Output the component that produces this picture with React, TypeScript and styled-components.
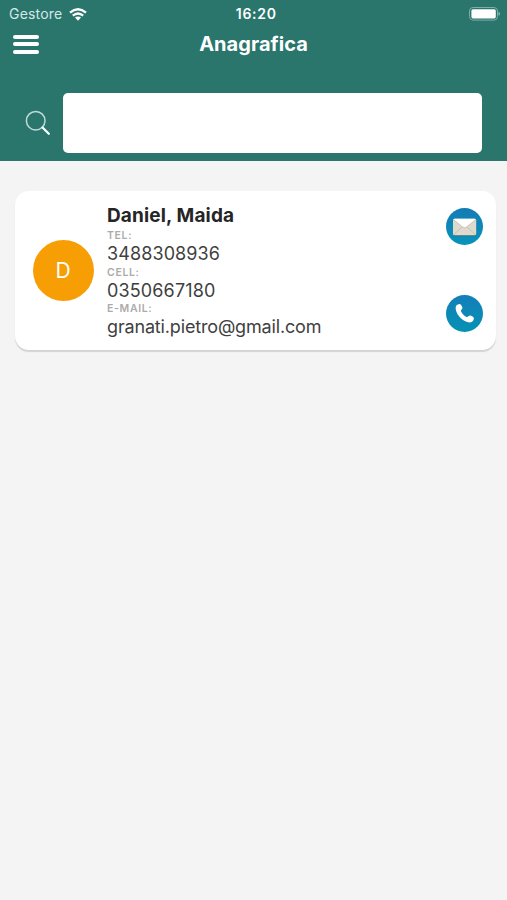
import React from 'react';
import styled, { createGlobalStyle } from 'styled-components';

const Global = createGlobalStyle`
  * { box-sizing: border-box; }
  body { margin: 0; background: #f4f4f4; font-family: Inter, "Liberation Sans", sans-serif; }
`;
const Screen = styled.main` min-height: 900px; background: #f4f4f4; `;
const Header = styled.header` height: 161px; background: #2a766d; color: #fff; display: flex; flex-direction: column; `;
const StatusBar = styled.div`
  height: 28px; display: grid; grid-template-columns: 1fr auto 1fr; align-items: center;
  padding: 0 6px 0 9px; font-size: 14px; line-height: 28px;
`;
const Carrier = styled.div` display: flex; align-items: center; gap: 7px; color: #d5e8e5; `;
const CarrierName = styled.span` letter-spacing: 0.2px; `;
const Clock = styled.time` font-weight: 600; font-size: 14px; letter-spacing: 0.7px; padding-left: 2.5px; `;
const Power = styled.div` display: flex; justify-content: flex-end; `;
const TitleBar = styled.div` height: 32px; display: grid; grid-template-columns: 1fr auto 1fr; align-items: center; padding: 0 13px; `;
const MenuButton = styled.button`
  width: 26px; height: 19px; padding: 0; border: 0; background: none; display: flex; flex-direction: column; justify-content: space-between;
`;
const MenuLine = styled.span` height: 4px; width: 26px; border-radius: 2px; background: #fff; `;
const Title = styled.h1` margin: 0; font-size: 20px; font-weight: 650; line-height: 32px; letter-spacing: 0.05px; `;
const SearchRow = styled.label` display: flex; align-items: center; gap: 12px; margin-top: 33px; padding: 0 25px; `;
const SearchInput = styled.input` flex: 1; height: 60px; min-width: 0; border: 0; border-radius: 5px; background: #fff; padding: 0 12px; font: 18px Inter, sans-serif; outline: 0; `;
const Card = styled.article`
  margin: 30px 11px 0 15px; height: 159px; border-radius: 14px; background: #fff;
  box-shadow: 0 2px 1px #d3d3d3; display: flex; align-items: center; padding: 0 13px 0 18px;
`;
const Avatar = styled.div`
  width: 61px; height: 61px; border-radius: 50%; background: #f79e05; color: #fff;
  display: flex; align-items: center; justify-content: center; font-size: 21px;
  margin-bottom: 1px; padding-right: 1px;
`;
const Details = styled.div` flex: 1; margin-left: 13px; align-self: flex-start; padding-top: 12px; `;
const Name = styled.h2` margin: 0; font-size: 19px; line-height: 25px; font-weight: 680; color: #252525; letter-spacing: 0.14px; `;
const Fields = styled.div` padding-top: 1px; `;
const Label = styled.div` font-size: 10.5px; line-height: 14px; font-weight: 600; color: #ababab; letter-spacing: 0.65px; `;
const Value = styled.div<{ $tracking: number }>` font-size: 18px; line-height: 22.6px; color: #3f3f3f; letter-spacing: ${p => p.$tracking}px; `;
const Actions = styled.div` align-self: stretch; display: flex; flex-direction: column; justify-content: space-between; padding: 17px 0 18px; `;
const ActionButton = styled.button` width: 37px; height: 37px; padding: 0; border: 0; background: none; display: block; `;

const contact = {
  initial: 'D',
  name: 'Daniel, Maida',
  fields: [
    { label: 'TEL:', value: '3488308936', tracking: 0.1 },
    { label: 'CELL:', value: '0350667180', tracking: 0.13 },
    { label: 'E-MAIL:', value: 'granati.pietro@gmail.com', tracking: -0.16 },
  ],
};

const Wifi = () => (
  <svg width="18" height="13" viewBox="0 0 18 13">
    <g fill="none" stroke="#fff" strokeWidth="2.3">
      <path d="M1 4.6Q9-2 17 4.6" /><path d="M3.8 7.7Q9 3.2 14.2 7.7" />
    </g>
    <path d="M6 9.6Q9 7.2 12 9.6L9 12.7Z" fill="#fff" />
  </svg>
);
const Battery = () => (
  <svg width="33" height="14" viewBox="0 0 33 14">
    <rect x="1.5" y=".5" width="28" height="12.6" rx="3.5" fill="none" stroke="#7fada7" />
    <rect x="3.4" y="2.2" width="24.4" height="9.2" rx="1.6" fill="#fff" />
    <path d="M30.5 4.8v4q1.6-.7 1.6-2t-1.6-2" fill="#8bb5b0" />
  </svg>
);
const SearchIcon = () => (
  <svg width="26" height="26" viewBox="0 0 26 26" fill="none" strokeLinecap="round">
    <circle cx="10.7" cy="10.7" r="9.3" stroke="#c0dad7" strokeWidth="1.5" />
    <path d="M17.5 17.5l6.3 6.3" stroke="#fff" strokeWidth="2.3" />
  </svg>
);
const MailIcon = () => (
  <svg width="37" height="37" viewBox="0 0 37 37">
    <defs><linearGradient id="mail" x2="0" y2="1"><stop stopColor="#147bb5" /><stop offset="1" stopColor="#0794b9" /></linearGradient></defs>
    <circle cx="18.5" cy="18.5" r="18.5" fill="url(#mail)" />
    <rect x="7" y="11.8" width="23.2" height="16.4" rx="1.5" fill="#287386" />
    <rect x="7" y="10.8" width="23.2" height="16.5" rx="1.5" fill="#dedbce" />
    <path d="M7.5 26.8l9-8M29.7 26.8l-9-8" stroke="#bbb7a8" strokeWidth=".7" />
    <path d="M7.2 11.2Q7.5 10.8 8.5 10.8H28.7Q29.7 10.8 30 11.2L20.5 19Q18.6 20.4 16.7 19Z" fill="#fff" />
    <path d="M7.2 11.5l9.5 7.5q1.9 1.4 3.8 0l9.5-7.5" fill="none" stroke="#bbb7a8" strokeWidth=".7" />
  </svg>
);
const PhoneIcon = () => (
  <svg width="37" height="37" viewBox="0 0 37 37">
    <defs><linearGradient id="phone" x2="0" y2="1"><stop stopColor="#147fb9" /><stop offset="1" stopColor="#0691b4" /></linearGradient></defs>
    <circle cx="18.5" cy="18.5" r="18.5" fill="url(#phone)" />
    <path d="M11.1 9.8l2.3-.7c1.2-.1 2.2 1.2 3 3.3.5 1.4-1.5 2.2-1.5 3.5.9 2.5 3.2 4.9 5.7 6.1 1.6.2 2.3-1.8 3.7-1.5 2.1.8 3.6 1.7 3.6 2.9l-.6 2.2c-1.1 1.9-3.4 2.4-6 1.5-5.3-1.9-10-6.8-11.3-11.7-.7-2.4-.4-4.5 1.1-5.6Z" fill="#fff" />
  </svg>
);

export default function App() {
  return (
    <>
      <Global />
      <Screen>
        <Header>
          <StatusBar>
            <Carrier><CarrierName>Gestore</CarrierName><Wifi /></Carrier>
            <Clock>16:20</Clock>
            <Power><Battery /></Power>
          </StatusBar>
          <TitleBar>
            <MenuButton aria-label="Menu"><MenuLine /><MenuLine /><MenuLine /></MenuButton>
            <Title>Anagrafica</Title>
          </TitleBar>
          <SearchRow><SearchIcon /><SearchInput aria-label="Cerca" /></SearchRow>
        </Header>
        <Card>
          <Avatar>{contact.initial}</Avatar>
          <Details>
            <Name>{contact.name}</Name>
            <Fields>
              {contact.fields.map(({ label, value, tracking }) => (
                <React.Fragment key={label}>
                  <Label>{label}</Label>
                  <Value $tracking={tracking}>{value}</Value>
                </React.Fragment>
              ))}
            </Fields>
          </Details>
          <Actions>
            <ActionButton aria-label="E-mail"><MailIcon /></ActionButton>
            <ActionButton aria-label="Chiama"><PhoneIcon /></ActionButton>
          </Actions>
        </Card>
      </Screen>
    </>
  );
}
